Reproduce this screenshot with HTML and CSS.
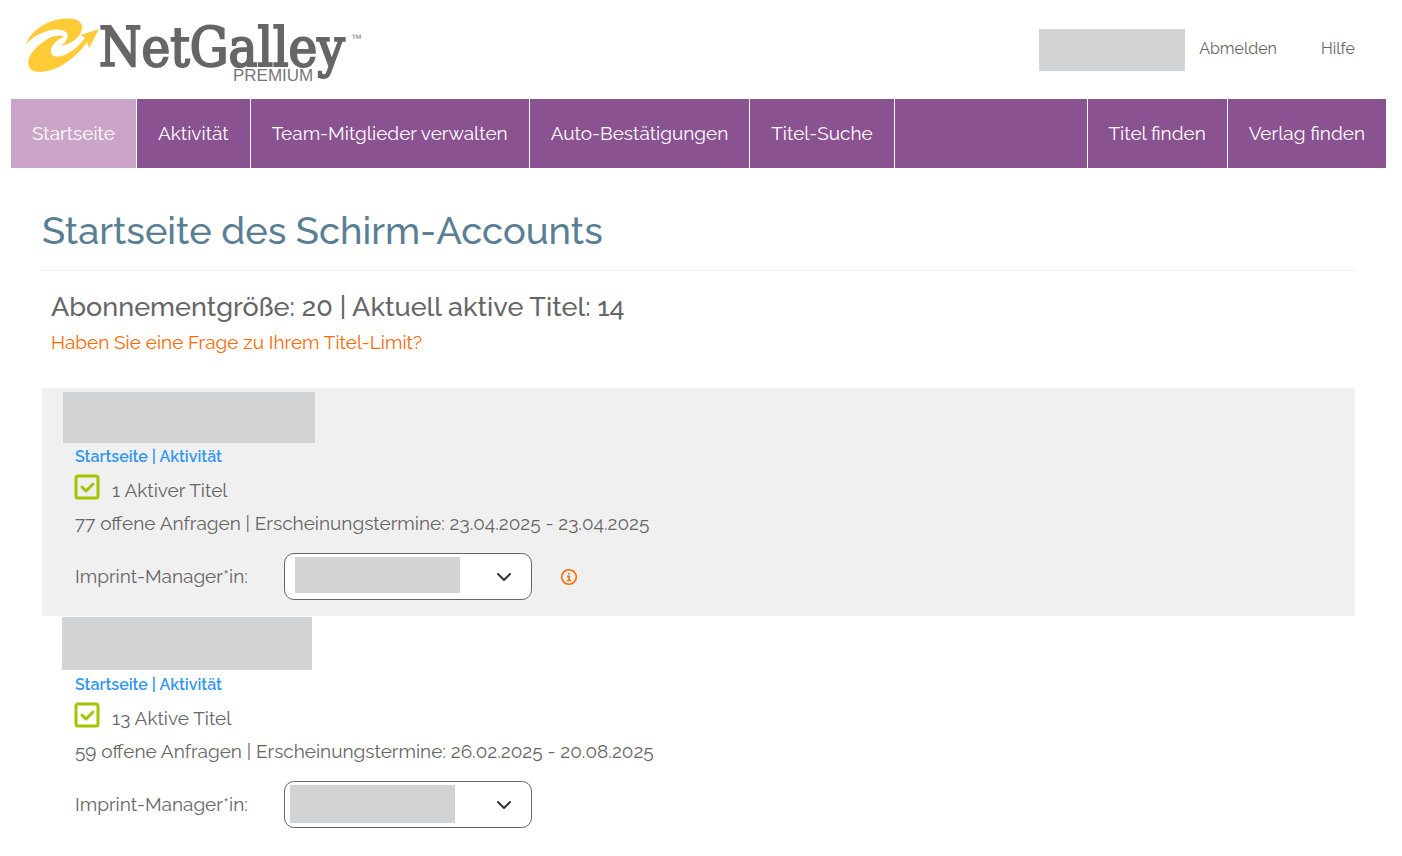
FILE: index.html
```html
<!DOCTYPE html>
<html lang="de">
<head>
    <meta charset="UTF-8">
    <meta name="viewport" content="width=device-width, initial-scale=1.0">
    <title>NetGalley Premium</title>
    <link rel="stylesheet" href="styles.css">
</head>
<body>
    <header class="site-header">
        <a href="#" class="logo" aria-label="NetGalley Premium">
            <svg width="340" height="70" viewBox="0 0 340 70">
                <g fill="#ffcb37">
                    <path d="M0 30 C6 15 22 7 34 5 C47 3 57 6 56 14 C55 24 45 30 34 32 C41 28 44 22 40 18 C31 12 13 17 0 30 Z"/>
                    <path d="M38 23 C33 20 24 22 17 28 C6 36 0 45 3 53 C7 60 21 59 33 53 C46 46 56 36 61 28 L63 34 L73 15 L55 21 L59 24 C53 32 45 39 36 42 C29 44 24 41 25 36 C26 30 32 25 38 23 Z"/>
                </g>
                <text class="logo-name" x="73" y="52">NetGalley</text>
                <text class="logo-plan" x="207" y="67">PREMIUM</text>
                <text class="logo-tm" x="325" y="28">™</text>
            </svg>
        </a>
        <div class="account">
            <span class="redacted account-name"></span>
            <a href="#">Abmelden</a>
            <a href="#">Hilfe</a>
        </div>
    </header>

    <nav class="main-nav">
        <a href="#" class="active">Startseite</a>
        <a href="#">Aktivität</a>
        <a href="#">Team-Mitglieder verwalten</a>
        <a href="#">Auto-Bestätigungen</a>
        <a href="#">Titel-Suche</a>
        <span class="spacer"></span>
        <a href="#">Titel finden</a>
        <a href="#">Verlag finden</a>
    </nav>

    <main class="content">
        <h1>Startseite des Schirm-Accounts</h1>

        <section class="summary">
            <h2>Abonnementgröße: 20 | Aktuell aktive Titel: 14</h2>
            <a href="#">Haben Sie eine Frage zu Ihrem Titel-Limit?</a>
        </section>

        <section class="imprint shaded">
            <div class="imprint-name"><span class="redacted"></span></div>
            <div class="imprint-body">
                <p class="links"><a href="#">Startseite</a> | <a href="#">Aktivität</a></p>
                <p class="titles">
                    <svg class="check" width="26" height="26" viewBox="0 0 26 26" fill="none" stroke="#a4c400" stroke-width="3" stroke-linecap="round" stroke-linejoin="round">
                        <rect x="2" y="2" width="22" height="22" rx="2"/>
                        <path d="M8 13l4 4 7-7"/>
                    </svg>
                    <span>1 Aktiver Titel</span>
                </p>
                <p class="requests">77 offene Anfragen | Erscheinungstermine: 23.04.2025 - 23.04.2025</p>
                <div class="manager">
                    <label for="manager1">Imprint-Manager*in:</label>
                    <div class="select-wrap">
                        <select id="manager1"><option></option></select>
                        <span class="redacted"></span>
                        <svg class="chevron" width="16" height="10" viewBox="0 0 16 10" fill="none" stroke="#333" stroke-width="2" stroke-linecap="round" stroke-linejoin="round">
                            <path d="M2 2l6 6 6-6"/>
                        </svg>
                    </div>
                    <button type="button" class="info" aria-label="Info">
                        <svg width="18" height="18" viewBox="0 0 18 18" fill="none" stroke="#ff6a00" stroke-width="1.6">
                            <circle cx="9" cy="9" r="7.3"/>
                            <path d="M9 5v1.6M7.2 8.4h1.9v4M7 12.5h4.2"/>
                        </svg>
                    </button>
                </div>
            </div>
        </section>

        <section class="imprint">
            <div class="imprint-name"><span class="redacted"></span></div>
            <div class="imprint-body">
                <p class="links"><a href="#">Startseite</a> | <a href="#">Aktivität</a></p>
                <p class="titles">
                    <svg class="check" width="26" height="26" viewBox="0 0 26 26" fill="none" stroke="#a4c400" stroke-width="3" stroke-linecap="round" stroke-linejoin="round">
                        <rect x="2" y="2" width="22" height="22" rx="2"/>
                        <path d="M8 13l4 4 7-7"/>
                    </svg>
                    <span>13 Aktive Titel</span>
                </p>
                <p class="requests">59 offene Anfragen | Erscheinungstermine: 26.02.2025 - 20.08.2025</p>
                <div class="manager">
                    <label for="manager2">Imprint-Manager*in:</label>
                    <div class="select-wrap">
                        <select id="manager2"><option></option></select>
                        <span class="redacted"></span>
                        <svg class="chevron" width="16" height="10" viewBox="0 0 16 10" fill="none" stroke="#333" stroke-width="2" stroke-linecap="round" stroke-linejoin="round">
                            <path d="M2 2l6 6 6-6"/>
                        </svg>
                    </div>
                </div>
            </div>
        </section>
    </main>
</body>
</html>
```

FILE: styles.css
```css
:root {
    --purple: #8a5291;
    --purple-light: #cba4c9;
    --text: #666;
    --redacted: #d2d3d5;
}

* {
    box-sizing: border-box;
}

body {
    margin: 0 16px 0 11px;
    font-family: Raleway, Lato, "Open Sans", sans-serif;
    font-size: 19px;
    line-height: 32px;
    color: var(--text);
    background-color: #fff;
}

a {
    color: inherit;
    text-decoration: none;
}

h1,
h2,
p {
    margin: 0;
}

.redacted {
    display: block;
    background-color: var(--redacted);
}

/* Header */
.site-header {
    display: flex;
    justify-content: space-between;
    align-items: flex-start;
    height: 99px;
    padding: 14px 31px 0 15px;
}

.logo svg {
    display: block;
    overflow: visible;
}

.logo-name {
    font-family: "DejaVu Serif Condensed", "DejaVu Serif", serif;
    font-size: 54px;
    fill: #666;
    stroke: #666;
    stroke-width: 2;
}

.logo-plan {
    font-family: "Liberation Sans", sans-serif;
    font-size: 17px;
    fill: #777;
}

.logo-tm {
    font-family: "Liberation Sans", sans-serif;
    font-size: 11px;
    fill: #777;
}

.account {
    display: flex;
    align-items: center;
    padding-top: 15px;
    font-size: 16px;
}

.account-name {
    width: 146px;
    height: 42px;
    margin-right: 14px;
}

.account a + a {
    margin-left: 44px;
}

.account a {
    margin-bottom: 2px;
}

/* Navigation */
.main-nav {
    display: flex;
    height: 69px;
    background-color: var(--purple);
    color: #fff;
    font-size: 19px;
    line-height: 69px;
}

.main-nav a {
    padding: 0 21px;
    border-right: 1px solid #fff;
    white-space: nowrap;
}

.main-nav a:last-child {
    border-right: 0;
}

.main-nav .active {
    background-color: var(--purple-light);
}

.main-nav .spacer {
    flex: 1;
    border-right: 1px solid #fff;
}

/* Content */
.content {
    padding: 32px 31px;
}

h1 {
    padding-bottom: 8px;
    border-bottom: 1px solid #eee;
    font-size: 38px;
    font-weight: 500;
    line-height: 62px;
    color: #5a7f94;
}

.summary {
    padding: 17px 9px 30px;
}

.summary h2 {
    font-size: 27px;
    font-weight: 500;
    line-height: 38px;
}

.summary a {
    display: block;
    color: #ff6a00;
}

/* Imprint rows */
.imprint-name {
    height: 56px;
    padding: 1px 20px;
}

.imprint-name .redacted {
    width: 250px;
    height: 53px;
}

.imprint.shaded {
    background-color: #f0f0f0;
}

.shaded .imprint-name {
    padding: 4px 21px;
}

.shaded .imprint-name .redacted {
    width: 252px;
    height: 51px;
}

.imprint-body {
    padding: 0 33px 16px;
}

.links {
    font-size: 16px;
    font-weight: 600;
    line-height: 26px;
    color: #3598f0;
}

.titles {
    display: flex;
    gap: 12px;
    padding-top: 4px;
}

.check {
    margin-left: -1px;
}

.requests {
    padding-top: 1px;
}

.manager {
    display: flex;
    align-items: center;
    padding-top: 14px;
}

.manager label {
    width: 209px;
    padding-bottom: 2px;
}

.select-wrap {
    position: relative;
    width: 248px;
    height: 47px;
}

.select-wrap select {
    width: 100%;
    height: 100%;
    border: 1px solid #666;
    border-radius: 10px;
    background-color: #fff;
    appearance: none;
}

.select-wrap .redacted {
    position: absolute;
    top: 4px;
    left: 6px;
    width: 165px;
    height: 38px;
    pointer-events: none;
}

.shaded .select-wrap .redacted {
    left: 11px;
    height: 36px;
}

.chevron {
    position: absolute;
    top: 19px;
    right: 20px;
    pointer-events: none;
}

.info {
    display: flex;
    margin-left: 28px;
    padding: 0;
    border: 0;
    background: none;
    cursor: pointer;
}
```
